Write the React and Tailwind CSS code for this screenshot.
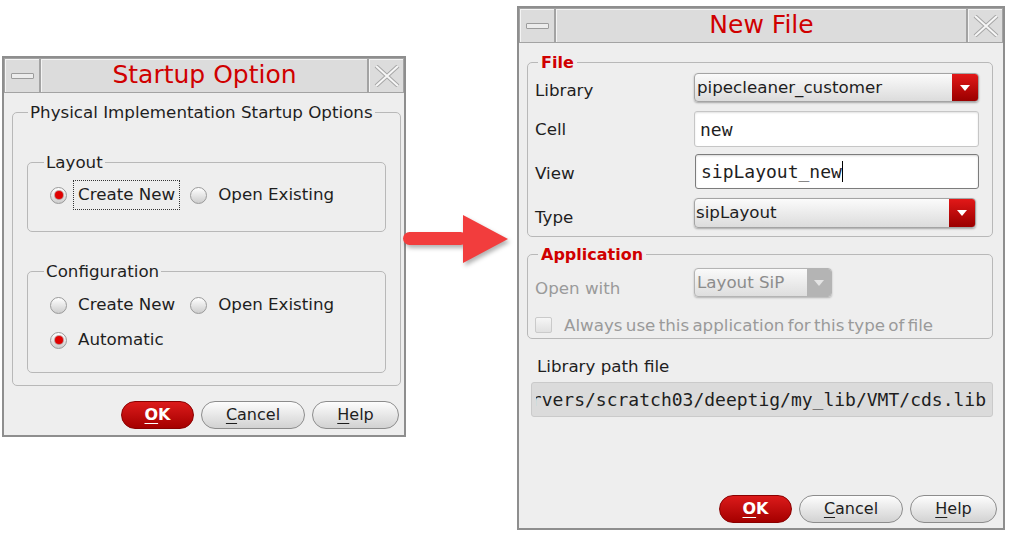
import React from "react";

function TitleBar({ title }) {
  return (
    <div className="flex h-[35px] gap-[2px] bg-[#a3a3a3] p-[1px]">
      <div className="w-[34px] flex items-center justify-center bg-[#dcdcdc] border-t border-l border-[#f4f4f4]">
        <div className="w-[23px] h-[6px] rounded-[1px] border border-[#9c9c9c] bg-[#ececec]" />
      </div>
      <div className="flex-1 flex items-center justify-center pb-[3px] bg-[#dcdcdc] border-t border-l border-[#f4f4f4] text-[25px] leading-none text-[#d00000]">
        {title}
      </div>
      <div className="w-[34px] flex items-center justify-center bg-[#dcdcdc] border-t border-l border-[#f4f4f4]">
        <svg width="26" height="22" viewBox="0 0 26 22">
          <path d="M2 1 L24 21 M24 1 L2 21" stroke="#a6a6a6" strokeWidth="4" />
          <path d="M2 1 L24 21 M24 1 L2 21" stroke="#f6f6f6" strokeWidth="2" />
        </svg>
      </div>
    </div>
  );
}

function Radio({ checked }) {
  return (
    <span className="w-[17px] h-[17px] shrink-0 rounded-full border border-[#9a9a9a] bg-linear-to-b from-white to-[#cdcdcd] flex items-center justify-center">
      {checked && <span className="w-[8px] h-[8px] rounded-full bg-[#e00000] shadow-[0_0_0_1px_rgba(120,0,0,0.35)]" />}
    </span>
  );
}

function RadioOption({ checked, focus, label }) {
  return (
    <div className="flex items-center">
      <Radio checked={checked} />
      <span
        className={
          focus
            ? "ml-[6px] h-[30px] px-[4px] flex items-center border border-dotted border-[#333]"
            : "ml-[6px] h-[30px] px-[4px] flex items-center border border-dotted border-transparent"
        }
      >
        {label}
      </span>
    </div>
  );
}

function Buttons() {
  return (
    <div className="flex justify-end text-[16px]">
      <button className="w-[73px] h-[28px] rounded-full border border-[#8a0000] bg-linear-to-b from-[#dc1a1a] to-[#a50000] text-white font-bold flex items-center justify-center">
        <span className="underline underline-offset-[3px]">O</span>K
      </button>
      <button className="ml-[7px] w-[104px] h-[28px] rounded-full border border-[#8c8c8c] bg-linear-to-b from-[#fdfdfd] to-[#d2d2d2] text-[#1e1e1e] flex items-center justify-center">
        <span className="underline underline-offset-[3px]">C</span>ancel
      </button>
      <button className="ml-[7px] w-[87px] h-[28px] rounded-full border border-[#8c8c8c] bg-linear-to-b from-[#fdfdfd] to-[#d2d2d2] text-[#1e1e1e] flex items-center justify-center">
        <span className="underline underline-offset-[3px]">H</span>elp
      </button>
    </div>
  );
}

function StartupDialog() {
  return (
    <div className="ml-[2px] mt-[56px] w-[404px] h-[381px] shrink-0 border-2 border-[#8e8e8e] bg-[#eeeeee] flex flex-col">
      <TitleBar title="Startup Option" />
      <fieldset className="ml-[8px] mr-[3px] mt-[10px] border border-[#b8b8b8] rounded-[5px] pb-[12px]">
        <legend className="ml-[15px] px-[2px] leading-[19px]">
          Physical Implementation Startup Options
        </legend>
        <fieldset className="mx-[14px] mt-[31px] border border-[#b8b8b8] rounded-[5px] pb-[21px]">
          <legend className="ml-[16px] px-[2px] leading-[19px]">Layout</legend>
          <div className="pl-[22px] mt-[8px] flex items-center gap-[10px]">
            <RadioOption checked focus label="Create New" />
            <RadioOption label="Open Existing" />
          </div>
        </fieldset>
        <fieldset className="mx-[14px] mt-[30px] border border-[#b8b8b8] rounded-[5px] pb-[17px]">
          <legend className="ml-[16px] px-[2px] leading-[19px]">
            Configuration
          </legend>
          <div className="pl-[22px] mt-[9px] flex items-center gap-[10px]">
            <RadioOption label="Create New" />
            <RadioOption label="Open Existing" />
          </div>
          <div className="pl-[22px] mt-[5px] flex items-center">
            <RadioOption checked label="Automatic" />
          </div>
        </fieldset>
      </fieldset>
      <div className="mt-auto pb-[6px] pr-[5px]">
        <Buttons />
      </div>
    </div>
  );
}

function DropArrow({ disabled }) {
  return (
    <svg width="10" height="6" viewBox="0 0 10 6">
      <path d="M0 0 L10 0 L5 6 Z" fill={disabled ? "#e4e4e4" : "#ffffff"} />
    </svg>
  );
}

function NewFileDialog() {
  return (
    <div className="ml-[5px] mt-[6px] w-[488px] h-[524px] shrink-0 border-2 border-[#8e8e8e] bg-[#eeeeee] flex flex-col">
      <TitleBar title="New File" />
      <fieldset className="ml-[8px] mr-[10px] mt-[10px] border border-[#b8b8b8] rounded-[5px] pb-[6px]">
        <legend className="ml-[10px] px-[3px] leading-[19px] text-[16px] font-bold text-[#d00000]">
          File
        </legend>
        <div className="grid grid-cols-[166px_1fr] pr-[13px] items-center">
          <span className="pl-[7px] pt-[6px]">Library</span>
          <div className="h-[29px] flex rounded-[4px] border border-[#a4a4a4] bg-linear-to-b from-[#fbfbfb] to-[#dcdcdc] shadow-[0_1px_2px_rgba(0,0,0,0.3)] overflow-hidden">
            <span className="flex-1 flex items-center pl-[2px]">pipecleaner_customer</span>
            <span className="w-[26px] flex items-center justify-center bg-linear-to-b from-[#e21818] to-[#9a0000]">
              <DropArrow />
            </span>
          </div>
        </div>
        <div className="mt-[8px] grid grid-cols-[166px_1fr] pr-[13px] items-center">
          <span className="pl-[7px]">Cell</span>
          <div className="h-[36px] flex items-center pl-[5px] rounded-[3px] border border-[#c6c6c6] bg-white shadow-[inset_0_1px_2px_rgba(0,0,0,0.12)] font-['DejaVu_Sans_Mono',monospace] text-[18px]">
            new
          </div>
        </div>
        <div className="mt-[7px] grid grid-cols-[166px_1fr] pr-[13px] items-center">
          <span className="pl-[7px] pt-[3px]">View</span>
          <div className="ml-[1px] h-[35px] flex items-center pl-[5px] rounded-[3px] border border-[#7c7c7c] bg-white shadow-[inset_0_1px_2px_rgba(0,0,0,0.15)] font-['DejaVu_Sans_Mono',monospace] text-[18px]">
            sipLayout_new
            <span className="w-[1px] h-[21px] bg-black" />
          </div>
        </div>
        <div className="mt-[6px] grid grid-cols-[166px_1fr] pr-[13px] items-center">
          <span className="pl-[7px] pt-[10px]">Type</span>
          <div className="mr-[3px] h-[30px] flex rounded-[4px] border border-[#a4a4a4] bg-linear-to-b from-[#fbfbfb] to-[#dcdcdc] shadow-[0_1px_2px_rgba(0,0,0,0.3)] overflow-hidden">
            <span className="flex-1 flex items-center pl-[1px]">sipLayout</span>
            <span className="w-[26px] flex items-center justify-center bg-linear-to-b from-[#e21818] to-[#9a0000]">
              <DropArrow />
            </span>
          </div>
        </div>
      </fieldset>
      <fieldset className="ml-[8px] mr-[10px] mt-[8px] border border-[#b8b8b8] rounded-[5px] pb-[3px]">
        <legend className="ml-[10px] px-[3px] leading-[19px] text-[16px] font-bold text-[#d00000]">
          Application
        </legend>
        <div className="grid grid-cols-[166px_1fr] items-center text-[#9a9a9a]">
          <span className="pl-[7px] pt-[12px]">Open with</span>
          <div className="w-[138px] h-[29px] flex rounded-[4px] border border-[#b4b4b4] bg-linear-to-b from-[#fafafa] to-[#dedede] shadow-[0_1px_2px_rgba(0,0,0,0.25)] overflow-hidden">
            <span className="flex-1 flex items-center pl-[2px] text-[#8c8c8c]">Layout SiP</span>
            <span className="w-[24px] flex items-center justify-center bg-[#b4b4b4]">
              <DropArrow disabled />
            </span>
          </div>
        </div>
        <div className="mt-[14px] h-[20px] pl-[7px] flex items-center text-[#9a9a9a]">
          <span className="w-[17px] h-[16px] rounded-[2px] border border-[#cacaca] bg-linear-to-b from-[#f6f6f6] to-[#e0e0e0]" />
          <span className="ml-[12px] [word-spacing:-2px]">
            Always use this application for this type of file
          </span>
        </div>
      </fieldset>
      <div className="mt-[18px] pl-[18px] leading-[19px]">Library path file</div>
      <div className="mt-[6px] ml-[12px] mr-[10px] h-[35px] flex items-center pl-[4px] pr-[6px] rounded-[3px] border border-[#cacaca] bg-[#dbdbdb] font-['DejaVu_Sans_Mono',monospace] text-[18px] whitespace-nowrap">
        <div className="flex-1 flex justify-end overflow-hidden">
          <span className="shrink-0">/servers/scratch03/deeptig/my_lib/VMT/cds.lib</span>
        </div>
      </div>
      <div className="mt-auto pb-[5px] pr-[6px]">
        <Buttons />
      </div>
    </div>
  );
}

function Arrow() {
  return (
    <svg
      className="relative mt-[212px] ml-[-6px] shrink-0 drop-shadow-[2px_3px_2px_rgba(0,0,0,0.3)]"
      width="112"
      height="56"
      viewBox="0 0 112 56"
    >
      <rect x="3" y="20" width="64" height="13" rx="6.5" fill="#f23d3d" />
      <path d="M63 3 L108 27 L63 51 Z" fill="#f23d3d" />
    </svg>
  );
}

export default function App() {
  return (
    <div className="w-[1013px] h-[537px] bg-white flex items-start overflow-hidden font-['DejaVu_Sans',sans-serif] text-[16.7px] text-[#1e1e1e]">
      <StartupDialog />
      <Arrow />
      <NewFileDialog />
    </div>
  );
}
